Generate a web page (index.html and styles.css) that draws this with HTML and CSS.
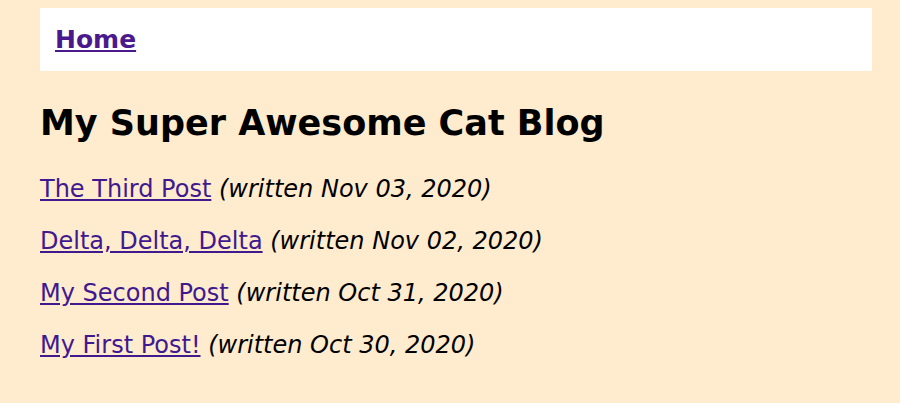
FILE: index.html
```html
<!DOCTYPE html>
<html>
<head>
<meta charset="utf-8">
<link rel="stylesheet" href="styles.css">
</head>
<body>
<div class="page">
  <nav class="nav"><a class="home" href="#">Home</a></nav>
  <h1 class="title">My Super Awesome Cat Blog</h1>
  <p class="post"><a href="#">The Third Post</a> <em>(written Nov 03, 2020)</em></p>
  <p class="post"><a href="#">Delta, Delta, Delta</a> <em>(written Nov 02, 2020)</em></p>
  <p class="post"><a href="#">My Second Post</a> <em>(written Oct 31, 2020)</em></p>
  <p class="post"><a href="#">My First Post!</a> <em>(written Oct 30, 2020)</em></p>
</div>
</body>
</html>
```
FILE: styles.css
```css
html, body {
  margin: 0;
  padding: 0;
  background: #ffebcd;
}
body {
  font-family: "DejaVu Sans", Verdana, sans-serif;
  color: #000;
}
.page {
  margin: 8px 28px 0 40px;
}
.nav {
  background: #fff;
  height: 63px;
  padding: 0 15px;
  display: flex;
  align-items: center;
}
.home {
  font-size: 25px;
  font-weight: bold;
  color: #4a1a8d;
}
.title {
  font-size: 35px;
  line-height: 40px;
  margin: 32px 0 30px;
}
.post {
  font-size: 24px;
  margin: 0 0 20px;
  line-height: 32px;
}
.post a {
  color: #40198f;
}
```
